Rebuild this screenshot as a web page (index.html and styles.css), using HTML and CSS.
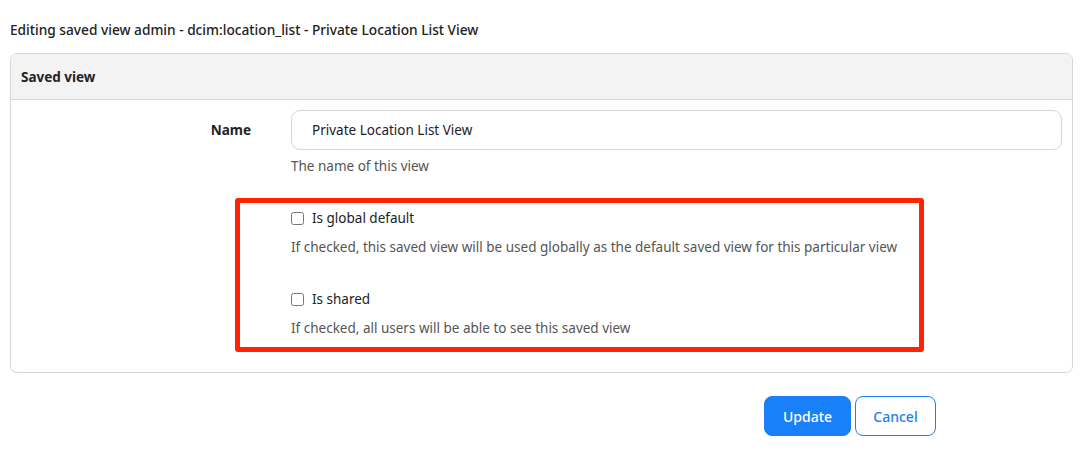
FILE: index.html
```html
<!DOCTYPE html>
<html>
<head>
<meta charset="utf-8">
<link rel="stylesheet" href="styles.css">
</head>
<body>
<div class="page">
  <h1 class="title">Editing saved view admin - dcim:location_list - Private Location List View</h1>
  <div class="card">
    <div class="card-header">Saved view</div>
    <div class="card-body">
      <div class="row">
        <label class="label" for="name">Name</label>
        <div class="field">
          <input id="name" class="input" type="text" value="Private Location List View">
          <div class="help help-name">The name of this view</div>
        </div>
      </div>
      <div class="checks">
        <div class="row">
          <div></div>
          <div class="field">
            <label class="check"><input type="checkbox" class="cb"><span>Is global default</span></label>
            <div class="help help-check">If checked, this saved view will be used globally as the default saved view for this particular view</div>
          </div>
        </div>
        <div class="row row-shared">
          <div></div>
          <div class="field">
            <label class="check"><input type="checkbox" class="cb"><span>Is shared</span></label>
            <div class="help help-check">If checked, all users will be able to see this saved view</div>
          </div>
        </div>
        <div class="highlight"></div>
      </div>
    </div>
  </div>
  <div class="actions">
    <button class="btn btn-primary">Update</button>
    <button class="btn btn-outline">Cancel</button>
  </div>
</div>
</body>
</html>
```

FILE: styles.css
```css
* { box-sizing: border-box; }
html, body { margin: 0; padding: 0; background: #fff; }
body {
  font-family: "Noto Sans", "Open Sans", sans-serif;
  font-size: 13.5px;
  color: #222;
}
.page { padding: 0 18px 0 10px; }
.title {
  margin: 0;
  padding-top: 20px;
  height: 53px;
  font-size: 13.7px;
  font-weight: 500;
  line-height: 20px;
  color: #222;
}
.card {
  border: 1px solid #d6d6d6;
  border-radius: 7px;
}
.card-header {
  height: 46px;
  background: #f3f3f3;
  border-bottom: 1px solid #d6d6d6;
  border-radius: 7px 7px 0 0;
  padding: 0 10px;
  display: flex;
  align-items: center;
  font-weight: 700;
  font-size: 13.5px;
}
.card-body { padding: 10px 10px 35px 0; }
.row {
  display: grid;
  grid-template-columns: 280px 1fr;
}
.label {
  text-align: right;
  padding-right: 40px;
  font-weight: 700;
  line-height: 40px;
}
.input {
  display: block;
  width: 100%;
  height: 40px;
  border: 1px solid #d6d6d6;
  border-radius: 9px;
  padding: 0 20px;
  font-family: inherit;
  font-size: 13.5px;
  color: #222;
  outline: none;
}
.help { color: #555; line-height: 18px; }
.help-name { margin-top: 7px; }
.checks { position: relative; margin-top: 33px; }
.check {
  display: flex;
  align-items: center;
  height: 20px;
  gap: 8px;
}
.cb {
  margin: 0;
  width: 13px;
  height: 13px;
}
.help-check { margin-top: 10px; }
.row-shared { margin-top: 33px; }
.highlight {
  position: absolute;
  left: 224px;
  top: -10px;
  width: 689px;
  height: 154px;
  border: 5px solid #ff2400;
  border-radius: 3px;
  pointer-events: none;
}
.actions {
  display: flex;
  gap: 4px;
  padding-left: 754px;
  margin-top: 23px;
}
.btn {
  height: 40px;
  border-radius: 8px;
  font-family: inherit;
  font-size: 14px;
  font-weight: 500;
  padding: 0 16px;
  cursor: pointer;
}
.btn-primary {
  background: #1a80f9;
  border: 1px solid #1a80f9;
  color: #fff;
  width: 87px;
}
.btn-outline {
  background: #fff;
  border: 1px solid #1a80f9;
  color: #1a80f9;
  width: 81px;
}
```
